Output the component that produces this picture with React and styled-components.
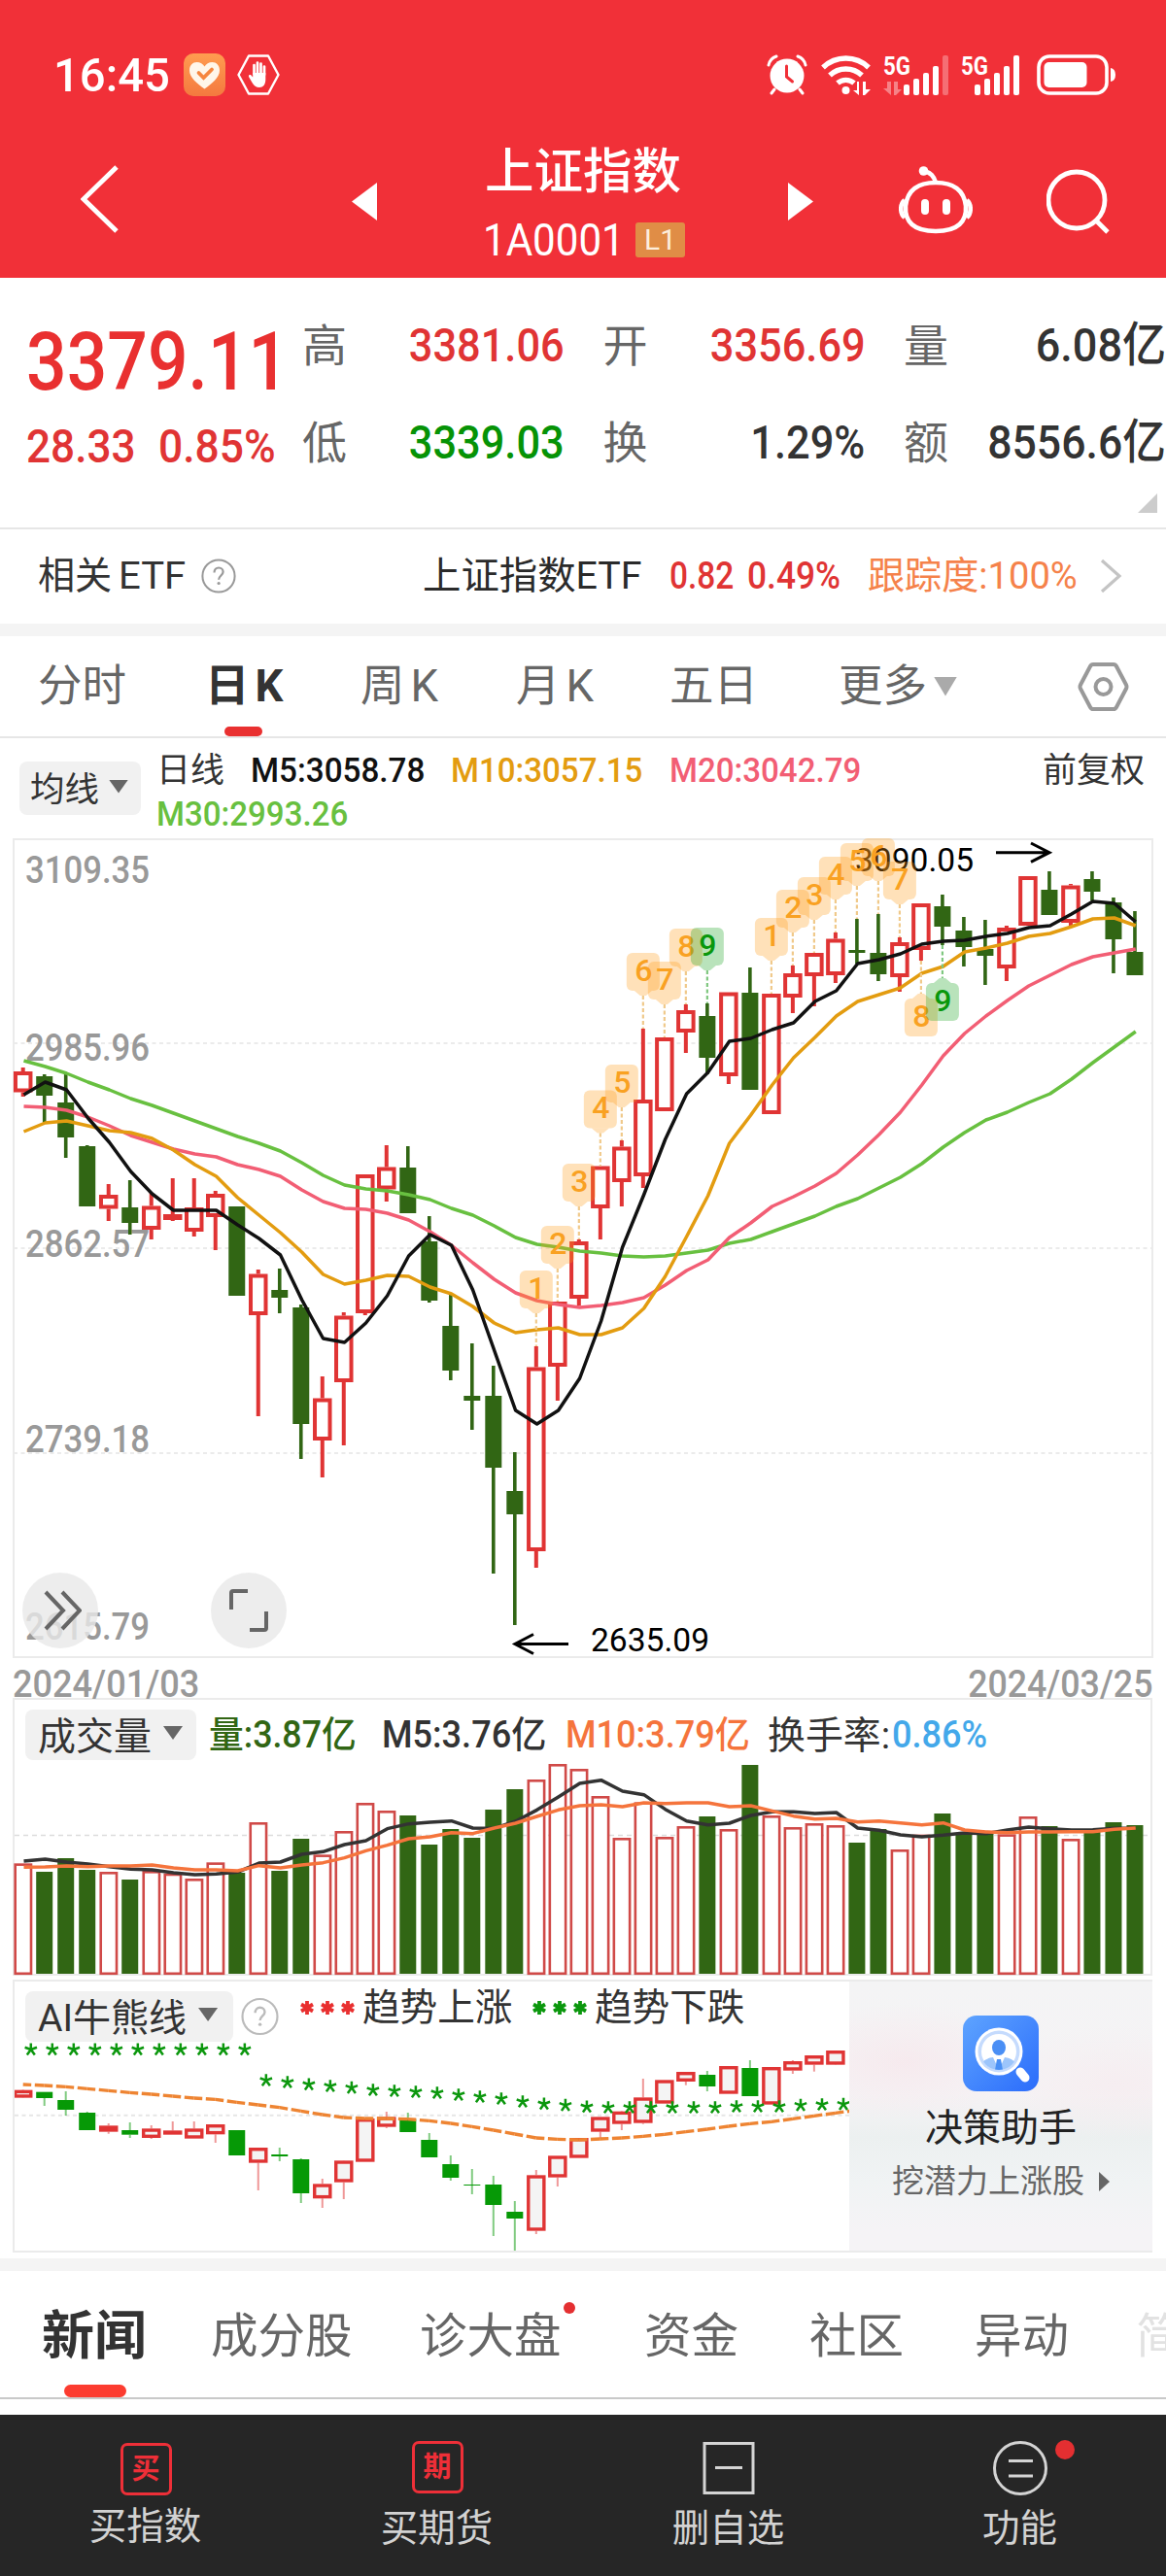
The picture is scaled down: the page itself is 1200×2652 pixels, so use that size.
import React from "react";
import styled, { createGlobalStyle } from "styled-components";

const GlobalStyle = createGlobalStyle`
  * { box-sizing: border-box; }
  body {
    margin: 0;
    background: #fff;
    font-family: Roboto, "Noto Sans CJK SC", sans-serif;
    color: #333;
  }
`;

const RED = "#e03434";
const GREEN = "#316614";
const FONT = 'Roboto, "Noto Sans CJK SC", sans-serif';

/* ---------- data ---------- */
const STEP = 22.005;
const cx = (i) => 23.7 + i * STEP;

// direction, high, body top, body bottom, low
const candles = [
  ["r", 1099, 1103, 1124.5, 1129], ["g", 1106, 1108, 1128, 1157], ["g", 1106, 1135, 1171, 1192],
  ["g", 1179, 1180, 1242, 1242], ["r", 1219, 1230, 1244.5, 1257], ["g", 1215, 1243, 1259, 1271],
  ["r", 1228, 1241.5, 1266, 1276], ["r", 1213, 1250, 1256, 1257], ["r", 1213, 1243, 1268, 1273],
  ["r", 1226, 1229, 1253, 1287], ["g", 1242, 1242, 1334, 1334], ["r", 1307, 1311.5, 1354, 1458],
  ["g", 1306, 1328, 1336, 1352], ["g", 1343, 1346, 1466, 1502], ["r", 1417, 1439.5, 1483, 1521],
  ["r", 1351, 1354.5, 1423, 1488], ["r", 1209, 1209, 1352, 1354], ["r", 1179, 1201.5, 1224.5, 1237],
  ["g", 1180, 1202, 1249, 1249], ["g", 1252, 1278, 1339, 1341], ["g", 1333, 1365, 1411, 1421],
  ["g", 1383, 1437, 1442, 1472], ["g", 1406, 1437, 1511, 1620], ["g", 1495, 1535, 1559, 1673],
  ["r", 1386, 1407.5, 1597, 1614], ["r", 1340, 1340, 1407, 1442], ["r", 1276, 1278, 1337, 1344],
  ["r", 1200.5, 1200.5, 1244, 1276], ["r", 1174, 1180.5, 1217, 1242], ["r", 1059, 1132, 1211, 1223],
  ["r", 1068, 1068, 1144, 1144], ["r", 1034, 1040, 1063, 1084], ["g", 1033, 1046, 1089, 1106],
  ["r", 1021.5, 1021.5, 1108, 1116], ["g", 996, 1022, 1122, 1122], ["r", 1023, 1023, 1147, 1147],
  ["r", 994, 1002, 1027, 1043], ["r", 981, 981, 1005, 1036], ["r", 960, 966.5, 1004, 1012],
  ["g", 946, 978, 981, 992], ["g", 941, 981, 1003, 1010], ["r", 965, 970, 1006, 1021],
  ["r", 930, 930, 978, 989], ["g", 921, 933, 954, 973], ["g", 944, 958, 975, 995],
  ["g", 947, 977, 984, 1014], ["r", 953, 955, 997, 1010], ["r", 902, 902, 953, 953],
  ["g", 897, 916, 942, 942], ["r", 910, 911.5, 950, 953], ["g", 897, 905, 918, 927],
  ["g", 924, 929, 967, 1002], ["g", 938, 980, 1004, 1004],
];

const ma5 = [1127, 1114, 1122, 1151, 1176, 1206, 1229, 1246, 1246, 1246, 1261, 1275, 1292, 1338, 1378, 1382, 1362, 1334, 1293, 1271, 1282, 1328, 1390, 1452, 1466, 1452, 1419, 1360, 1284, 1230, 1173, 1126, 1104, 1072, 1069, 1060, 1053, 1031, 1020, 992, 988, 982, 972, 969, 968, 964, 961, 955, 953, 941, 928, 930, 949];
const ma10 = [1165, 1156, 1154, 1159, 1164, 1166, 1172, 1184, 1199, 1211, 1233, 1251, 1269, 1289, 1312, 1322, 1318, 1313, 1314, 1325, 1332, 1345, 1362, 1372, 1369, 1367, 1374, 1374, 1367, 1347, 1314, 1273, 1231, 1177, 1148, 1117, 1089, 1068, 1046, 1031, 1024, 1017, 1002, 995, 980, 976, 971, 964, 961, 954, 946, 945, 953];
const ma20 = [1139, 1140, 1143, 1150, 1159, 1169, 1176, 1183, 1188, 1191, 1199, 1204, 1211, 1225, 1237, 1244, 1245, 1249, 1256, 1268, 1282, 1300, 1317, 1331, 1339, 1343, 1346, 1344, 1341, 1336, 1323, 1308, 1297, 1274, 1259, 1242, 1232, 1221, 1208, 1189, 1168, 1145, 1117, 1087, 1064, 1046, 1030, 1015, 1004, 993, 985, 981, 977];
const ma30 = [1092, 1098, 1105, 1114, 1122, 1131, 1138, 1146, 1154, 1162, 1170, 1177, 1185, 1197, 1210, 1220, 1224, 1226, 1230, 1235, 1244, 1251, 1262, 1274, 1281, 1284, 1288, 1290, 1293, 1294, 1293, 1290, 1287, 1280, 1276, 1268, 1260, 1252, 1242, 1234, 1223, 1212, 1198, 1181, 1166, 1153, 1145, 1135, 1126, 1111, 1094, 1078, 1062];

// candle index, count, drawn under the candle
const turns = [
  [24, 1], [25, 2], [26, 3], [27, 4], [28, 5], [29, 6], [30, 7], [31, 8], [32, 9],
  [35, 1], [36, 2], [37, 3], [38, 4], [39, 5], [40, 6], [41, 7], [42, 8, true], [43, 9, true],
];

const volumeTops = [535, 561, 519, 555, 561, 585, 558, 566, 582, 532, 564, 408, 558, 459, 508, 435, 348, 372, 387, 477, 429, 456, 369, 306, 276, 228, 243, 327, 456, 346, 453, 420, 390, 429, 231, 387, 423, 411, 417, 471, 429, 492, 446, 381, 444, 440, 445, 390, 420, 459, 435, 408, 417];
const vol5 = [528, 522, 531, 537, 545, 553, 555, 564, 570, 568, 562, 534, 531, 507, 499, 477, 465, 428, 413, 408, 404, 426, 427, 405, 370, 330, 288, 278, 312, 323, 368, 404, 416, 411, 387, 376, 376, 381, 378, 426, 433, 447, 453, 448, 441, 443, 432, 423, 428, 432, 431, 427, 427];
const vol10 = [547, 546, 543, 545, 543, 543, 540, 549, 555, 555, 558, 542, 549, 540, 533, 518, 496, 479, 459, 453, 440, 443, 426, 411, 390, 370, 357, 354, 360, 348, 350, 348, 348, 360, 357, 373, 389, 398, 396, 407, 404, 410, 416, 410, 432, 438, 440, 438, 438, 437, 437, 430, 426];

const trendCandles = [
  ["r", 364, 365, 389, 390], ["g", 371, 371, 390, 414], ["g", 369, 396, 426, 444], ["g", 432, 435, 489, 489],
  ["r", 468, 475, 494, 500], ["g", 465, 489, 503, 513], ["r", 474, 484, 513, 516], ["r", 462, 490, 503, 503],
  ["r", 462, 484, 515, 515], ["r", 471, 471, 502, 528], ["g", 489, 489, 567, 567], ["r", 543, 543, 590, 675],
  ["g", 543, 564, 570, 585], ["g", 576, 579, 684, 714], ["r", 639, 655, 700, 729], ["r", 582, 583, 650, 702],
  ["r", 453, 453, 587, 587], ["r", 432, 448, 479, 483], ["g", 435, 455, 495, 495], ["g", 498, 519, 573, 573],
  ["g", 567, 594, 636, 645], ["g", 609, 657, 660, 687], ["g", 630, 657, 720, 816], ["g", 708, 741, 762, 861],
  ["r", 612, 628, 800, 810], ["r", 568, 568, 635, 663], ["r", 513, 513, 575, 575], ["r", 448, 448, 494, 515],
  ["r", 430, 431, 470, 489], ["r", 330, 388, 467, 470], ["r", 334, 334, 407, 407], ["r", 309, 309, 339, 350],
  ["g", 306, 318, 354, 369], ["r", 291, 291, 377, 377], ["g", 273, 297, 384, 384], ["r", 294, 294, 410, 410],
  ["r", 273, 276, 305, 315], ["r", 258, 258, 287, 308], ["r", 243, 243, 287, 288],
];
const trendLine = [348, 351, 355, 361, 367, 373, 378, 384, 390, 394, 403, 411, 419, 430, 441, 450, 453, 453, 455, 460, 468, 478, 489, 501, 513, 517, 519, 516, 513, 508, 502, 494, 486, 477, 469, 463, 454, 445, 436, 427];
const stars = [240, 240, 240, 240, 240, 240, 240, 240, 240, 240, 240, 335, 341, 348, 353, 358, 365, 368, 371, 374, 380, 386, 392, 401, 408, 412, 417, 419, 419, 419, 419, 419, 419, 416, 416, 416, 412, 410, 409];

const volY = (v) => 1740 + v / 3;
const trendY = (v) => 2030 + v / 3;
const points = (list, fn = (v) => v) => list.map((v, i) => `${cx(i) + 0.8},${fn(v)}`).join(" ");

/* ---------- shared ---------- */
const Page = styled.main`
  width: 1200px;
  height: 2652px;
  overflow: hidden;
  background: #fff;
`;
const Figure = styled.span`
  display: flex;
  justify-content: ${(p) => (p.$end ? "flex-end" : "flex-start")};
  width: ${(p) => (p.$w ? `${p.$w}px` : "auto")};
  flex: none;
  white-space: nowrap;
  font-size: ${(p) => p.$size}px;
  font-weight: ${(p) => p.$weight || 500};
  color: ${(p) => p.$color || "inherit"};
  transform: scaleX(${(p) => p.$k || 0.88});
  transform-origin: ${(p) => (p.$end ? "right" : "left")} center;
`;
const Band = styled.div`
  height: 13px;
  background: #f4f4f4;
`;

/* ---------- header ---------- */
const Header = styled.header`
  height: 286px;
  background: #f13038;
  color: #fff;
`;
const StatusBar = styled.div`
  display: flex;
  align-items: center;
  height: 128px;
  padding: 26px 52px 0 55px;
`;
const StatusIcons = styled.div`
  display: flex;
  align-items: center;
  margin-left: auto;
`;
const NavBar = styled.nav`
  display: grid;
  grid-template-columns: 279px 137px 312px 115px 151px 1fr;
  align-items: center;
  height: 158px;
  padding-left: 83px;
`;
const TitleBlock = styled.div`
  align-self: start;
  padding-top: 19px;
`;
const Title = styled.h1`
  margin: 0;
  font-size: 50.5px;
  line-height: 60px;
  font-weight: 500;
`;
const CodeRow = styled.div`
  display: flex;
  align-items: center;
  height: 60px;
  margin: 10px 0 0 -2px;
`;
const LevelBadge = styled.span`
  width: 51px;
  height: 36px;
  border-radius: 3px;
  background: #e08d46;
  color: #fdeedd;
  font-size: 30px;
  line-height: 36px;
  text-align: center;
`;

const SignalIcon = ({ dim }) => (
  <svg width={dim ? 68 : 61} height="42" viewBox={dim ? "0 0 68 42" : "0 0 61 42"} fill="#fff" overflow="visible">
    <text x="0" y="20.500" fontSize="26" fontWeight="700" fontFamily={FONT} textLength="28" lengthAdjust="spacingAndGlyphs">5G</text>
    {dim && <path d="M0 35h4v-7h4v14zM11 28h4v8h4l-6 6h-2z" opacity=".4" />}
    {[11, 17, 23, 30, 41].map((h, i) => (
      <rect key={i} x={(dim ? 21 : 14) + i * 10} y={42 - h} width="6" height={h} rx="2" opacity={dim && i === 4 ? 0.3 : 1} />
    ))}
  </svg>
);

const StatusSection = () => (
  <StatusBar>
    <Figure $size={49} $k={0.965} $w={134}>16:45</Figure>
    <svg width="43" height="44" viewBox="0 0 43 44">
      <defs>
        <linearGradient id="heart" x1="0" y1="0" x2="0" y2="1">
          <stop offset="0" stopColor="#ff9c50" />
          <stop offset="1" stopColor="#f4793f" />
        </linearGradient>
      </defs>
      <rect width="43" height="44" rx="10" fill="url(#heart)" />
      <path d="M21.5 36.500C14 31 6 25 6 17.500C6 12 9.500 9 13.500 9C17 9 20 11 21.500 13.500C23 11 26 9 29.500 9C33.500 9 37 12 37 17.500C37 25 29 31 21.500 36.500z" fill="#fff6ea" />
      <path d="M15.500 20l5 5 8.500-8.500" fill="none" stroke="#f6863f" strokeWidth="3.800" strokeLinecap="round" />
    </svg>
    <svg width="44" height="42" viewBox="0 0 44 42" style={{ marginLeft: 12 }} fill="none" stroke="#fff">
      <path d="M12 1.500h20L42.500 21 32 40.500H12L1.500 21z" strokeWidth="2.400" strokeLinejoin="round" />
      <path d="M17.500 20v-9M21 20V8.500M24.500 20V9.500M28 21v-8.500" strokeWidth="2.700" strokeLinecap="round" />
      <path d="M16.200 19h13.100v7c0 5-2.500 8-6.300 8-3.500 0-5.500-1.500-7.500-5l-3.500-6c-.5-2 1.500-2.500 2.500-1.500l1.700 2z" fill="#fff" stroke="none" />
    </svg>
    <StatusIcons>
      <svg width="42" height="42" viewBox="0 0 42 42">
        <circle cx="21" cy="22" r="17.500" fill="#fff" />
        <path d="M2 11a12 12 0 0 1 8-9M40 11a12 12 0 0 0-8-9M8 36l-3 4M34 36l3 4" fill="none" stroke="#fff" strokeWidth="3" strokeLinecap="round" />
        <path d="M20.500 12v11l6 5" fill="none" stroke="#f13038" strokeWidth="3" strokeLinecap="round" />
      </svg>
      <svg width="52" height="42" viewBox="0 0 52 42" style={{ marginLeft: 14 }} fill="none" stroke="#fff" strokeWidth="5.400">
        <path d="M2 13.500a34 34 0 0 1 47 0" />
        <path d="M9 21.500a24 24 0 0 1 33 0" />
        <path d="M17 29.500a13 13 0 0 1 17 0" />
        <circle cx="25.500" cy="37" r="4" fill="#fff" stroke="none" />
        <path d="M33 37h4v-9h2v14zM43 28h3v8h5l-6 6h-2z" fill="#fff" stroke="none" />
      </svg>
      <svg width="12" height="1" />
      <SignalIcon dim />
      <svg width="12" height="1" />
      <SignalIcon />
      <svg width="81" height="42" viewBox="0 0 81 42" style={{ marginLeft: 17 }}>
        <rect x="2" y="2" width="70" height="38" rx="11" fill="none" stroke="#fff" strokeWidth="3.600" />
        <rect x="7.500" y="8" width="44" height="26" rx="5" fill="#fff" />
        <path d="M76 14q5 1 5 7t-5 7z" fill="#fff" />
      </svg>
    </StatusIcons>
  </StatusBar>
);

const HeaderSection = () => (
  <Header>
    <StatusSection />
    <NavBar>
      <svg width="40" height="70" viewBox="0 0 40 70" fill="none" style={{ marginTop: -4 }}>
        <path d="M37 2L3 35l34 33" stroke="#fff" strokeWidth="5" />
      </svg>
      <svg width="26" height="39" viewBox="0 0 26 39"><path d="M26 0v39L0 19.500z" fill="#fff" /></svg>
      <TitleBlock>
        <Title>上证指数</Title>
        <CodeRow>
          <Figure $size={46} $k={0.915} $w={157} $weight={400}>1A0001</Figure>
          <LevelBadge>L1</LevelBadge>
        </CodeRow>
      </TitleBlock>
      <svg width="26" height="39" viewBox="0 0 26 39"><path d="M0 0v39l26-19.500z" fill="#fff" /></svg>
      <svg width="76" height="70" viewBox="0 0 76 70" fill="none" stroke="#fff" strokeWidth="4.600" style={{ marginTop: -3, marginLeft: -1 }}>
        <path d="M38 17C36 10 33 7 26 5" />
        <circle cx="25.500" cy="5" r="4.800" fill="#fff" stroke="none" />
        <path d="M38 17c18 0 29 7 31 24 1 16-8 26-31 26S6 57 7 41C9 24 20 17 38 17z" />
        <path d="M6 35c-5 4-5 14 0 18M70 35c5 4 5 14 0 18" />
        <path d="M27 38v8M49 38v8" strokeWidth="8" strokeLinecap="round" />
      </svg>
      <svg width="66" height="68" viewBox="0 0 66 68" fill="none" stroke="#fff" strokeWidth="4.800">
        <circle cx="31" cy="33" r="29" />
        <path d="M51 54l12 12" />
      </svg>
    </NavBar>
  </Header>
);

/* ---------- quote ---------- */
const Quote = styled.section`
  position: relative;
  display: flex;
  height: 259px;
  padding-left: 27px;
  border-bottom: 2px solid #e6e6e6;
`;
const PriceBlock = styled.div`
  width: 284px;
  padding-top: 43px;
  line-height: 87px;
`;
const ChangeRow = styled.div`
  display: flex;
`;
const StatGrid = styled.div`
  display: grid;
  grid-template-columns: repeat(3, 309.5px);
  grid-auto-rows: 100px;
  padding-top: 20px;
`;
const Stat = styled.div`
  display: flex;
  justify-content: space-between;
  width: 270px;
  line-height: 100px;
`;
const StatLabel = styled.span`
  font-size: 46px;
  line-height: 100px;
  color: #666;
`;
const Corner = styled.i`
  position: absolute;
  right: 9px;
  bottom: 15px;
  width: 20px;
  height: 20px;
  background: #ccc;
  clip-path: polygon(100% 0, 100% 100%, 0 100%);
`;

const stats = [
  ["高", "3381.06", RED], ["开", "3356.69", RED], ["量", "6.08亿", "#333", 0.92],
  ["低", "3339.03", "#069306"], ["换", "1.29%", "#333"], ["额", "8556.6亿", "#333", 0.91],
];

const QuoteSection = () => (
  <Quote>
    <PriceBlock>
      <Figure $size={84} $k={0.872} $color="#e93030">3379.11</Figure>
      <ChangeRow>
        <Figure $size={49} $k={0.9} $w={136} $color={RED}>28.33</Figure>
        <Figure $size={49} $k={0.905} $color={RED}>0.85%</Figure>
      </ChangeRow>
    </PriceBlock>
    <StatGrid>
      {stats.map(([label, value, color, k]) => (
        <Stat key={label}>
          <StatLabel>{label}</StatLabel>
          <Figure $size={49} $k={k || 0.885} $color={color} $end>{value}</Figure>
        </Stat>
      ))}
    </StatGrid>
    <Corner />
  </Quote>
);

/* ---------- related etf ---------- */
const EtfRow = styled.section`
  display: flex;
  align-items: center;
  height: 97px;
  padding: 0 0 2px 39px;
  line-height: 60px;
`;
const EtfName = styled.span`
  width: 396px;
  display: flex;
  align-items: center;
`;

const HelpIcon = ({ size, color }) => (
  <svg width={size} height={size} viewBox="0 0 36 36" fill="none" stroke={color}>
    <circle cx="18" cy="18" r="16.600" strokeWidth="2" />
    <path d="M13.500 14.500c0-3 2-5 4.600-5s4.500 1.800 4.500 4.300c0 3.500-4.500 4-4.500 8" strokeWidth="2.200" />
    <circle cx="18.100" cy="25.500" r="1.600" fill={color} stroke="none" />
  </svg>
);

const EtfSection = () => (
  <EtfRow>
    <EtfName>
      <Figure $size={38.5} $k={0.99} $w={83} $weight={400}>相关</Figure>
      <Figure $size={38.5} $k={1.04} $w={85} $weight={400}>ETF</Figure>
      <HelpIcon size={36} color="#999" />
    </EtfName>
    <Figure $size={39} $k={1.01} $w={254} $color="#2a2a2a" $weight={400}>上证指数ETF</Figure>
    <Figure $size={38} $k={0.88} $w={80} $color={RED}>0.82</Figure>
    <Figure $size={38} $k={0.93} $w={124} $color={RED}>0.49%</Figure>
    <Figure $size={38.5} $k={0.99} $w={239} $color="#f5824a" $weight={400}>跟踪度:100%</Figure>
    <svg width="23" height="36" viewBox="0 0 23 36"><path d="M2 2l18 16L2 34" fill="none" stroke="#c4c4c4" strokeWidth="3.200" /></svg>
  </EtfRow>
);

/* ---------- period tabs ---------- */
const PeriodTabs = styled.nav`
  display: grid;
  grid-template-columns: 175px 157px 160px 158px 174px 246px 1fr;
  align-items: center;
  height: 105px;
  padding-left: 39px;
  border-bottom: 2px solid #e6e6e6;
`;
const PeriodTab = styled.span`
  position: relative;
  display: flex;
  align-items: center;
  height: 103px;
  line-height: 60px;
  font-size: 45.5px;
  white-space: nowrap;
  color: ${(p) => (p.$active ? "#333" : "#666")};
  font-weight: ${(p) => (p.$active ? 700 : 400)};
  text-indent: ${(p) => (p.$active ? "-3px" : "0")};
  &::after {
    content: "";
    display: ${(p) => (p.$active ? "block" : "none")};
    position: absolute;
    left: 17px;
    bottom: 0;
    width: 39px;
    height: 10px;
    border-radius: 5px;
    background: #e93030;
  }
`;
const PeriodUnit = styled.span`
  margin-left: 6px;
  text-indent: 0;
`;
const Caret = styled.i`
  width: ${(p) => p.$w || 20}px;
  height: ${(p) => p.$h || 14}px;
  margin-left: 12px;
  background: ${(p) => p.$color || "#666"};
  clip-path: polygon(0 0, 100% 0, 50% 100%);
`;

const periods = [["分时"], ["日", "K"], ["周", "K"], ["月", "K"], ["五日"]];

const PeriodSection = () => (
  <PeriodTabs>
    {periods.map(([name, unit]) => (
      <PeriodTab key={name} $active={name === "日"}>
        {name}{unit && <PeriodUnit>{unit}</PeriodUnit>}
      </PeriodTab>
    ))}
    <PeriodTab>更多<Caret $w={24} $h={20} $color="#aaa" style={{ marginLeft: 7 }} /></PeriodTab>
    <svg width="53" height="50" viewBox="0 0 53 50" fill="none" stroke="#999" strokeWidth="4">
      <path d="M16 2h21q2 0 3 2l10 19q1 2 0 4L40 46q-1 2-3 2H16q-2 0-3-2L3 27q-1-2 0-4L13 4q1-2 3-2z" />
      <circle cx="26.500" cy="25" r="8" />
    </svg>
  </PeriodTabs>
);

/* ---------- ma legend ---------- */
const MaBar = styled.section`
  display: flex;
  height: 103px;
  padding-left: 20px;
`;
const PickButton = styled.span`
  display: flex;
  align-items: center;
  flex: none;
  width: ${(p) => p.$w}px;
  height: ${(p) => p.$h || 52}px;
  padding-left: ${(p) => p.$pad || 13}px;
  padding-bottom: 4px;
  border-radius: 8px;
  background: #f1f1f1;
  font-size: ${(p) => p.$size || 39}px;
  white-space: nowrap;
`;
const MaLegend = styled.div`
  flex: 1;
  padding: 11px 0 0 16px;
`;
const LegendRow = styled.div`
  display: flex;
  height: 45px;
  line-height: 45px;
`;
const Adjust = styled.span`
  padding: 11px 22px 0 0;
  font-size: 35px;
  line-height: 45px;
`;

const MaSection = () => (
  <MaBar>
    <PickButton $w={125} $h={55} $pad={11} $size={35.5} style={{ marginTop: 24 }}>均线<Caret style={{ marginLeft: 10 }} /></PickButton>
    <MaLegend>
      <LegendRow>
        <Figure $size={35} $k={1} $w={97} $weight={400}>日线</Figure>
        <Figure $size={35} $k={0.95} $w={206} $color="#111">M5:3058.78</Figure>
        <Figure $size={35} $k={0.945} $w={225} $color="#e39c10">M10:3057.15</Figure>
        <Figure $size={35} $k={0.945} $w={220} $color="#f25e74">M20:3042.79</Figure>
      </LegendRow>
      <LegendRow>
        <Figure $size={35} $k={0.945} $color="#68c040">M30:2993.26</Figure>
      </LegendRow>
    </MaLegend>
    <Adjust>前复权</Adjust>
  </MaBar>
);

/* ---------- charts ---------- */
const ChartPane = styled.section`
  position: relative;
  height: ${(p) => p.$h}px;
`;
const Canvas = styled.svg`
  display: block;
`;
const RoundButton = styled.button`
  position: absolute;
  left: ${(p) => p.$left}px;
  bottom: 10px;
  width: 78px;
  height: 78px;
  padding: 0;
  border: 0;
  border-radius: 50%;
  background: rgba(232, 232, 232, 0.8);
  display: flex;
  align-items: center;
  justify-content: center;
`;
const DateRow = styled.div`
  display: flex;
  justify-content: space-between;
  height: 41px;
  padding: 5px 14px 0 13px;
  line-height: 44px;
  color: #999;
`;
const PaneHead = styled.div`
  display: flex;
  height: ${(p) => p.$h}px;
  padding: 10px 0 0 11px;
`;
const FramedPane = styled.section`
  display: flex;
  width: 1173px;
  margin-left: 13px;
  border: 2px solid #ebebeb;
`;
const PaneBody = styled.div`
  width: ${(p) => p.$w}px;
  flex: none;
`;
const Readout = styled.div`
  display: flex;
  height: 52px;
  line-height: 53px;
  margin-left: ${(p) => p.$ml || 0}px;
`;

const Candle = ({ i, data: [dir, high, top, bottom, low], wick, down, fill, opacity = 1, stroke = 4 }) => {
  const x = cx(i);
  const color = dir === "r" ? RED : down;
  return (
    <g>
      <path d={`M${x} ${high}V${top}M${x} ${bottom}V${low}`} stroke={color} strokeWidth={wick} opacity={opacity} />
      {dir === "r" ? (
        <rect x={x - 9.75 + stroke / 2} y={top + stroke / 2} width={19.5 - stroke} height={Math.max(bottom - top - stroke, 0.5)} fill={fill} stroke={color} strokeWidth={stroke} />
      ) : (
        <rect x={x - 8.5} y={top} width="17" height={Math.max(bottom - top, 1)} fill={color} />
      )}
    </g>
  );
};

const TurnTag = ({ i, n, below }) => {
  const x = cx(i);
  const edge = below ? candles[i][4] : candles[i][1];
  const top = below ? edge + 39 : edge - 78;
  const nine = n === 9;
  const tip = below
    ? `M${x - 9} ${top}L${x - 3} ${top - 5}H${x + 3}L${x + 9} ${top}z`
    : `M${x - 9} ${top + 39}L${x - 3} ${top + 44}H${x + 3}L${x + 9} ${top + 39}z`;
  return (
    <g>
      <path d={below ? `M${x} ${edge}V${top - 5}` : `M${x} ${top + 44}V${edge}`} stroke={nine ? "#7fc77f" : "#f0c98a"} strokeWidth="2.200" strokeDasharray="4 2.500" />
      <g fill={nine ? "#17a31f" : "#ff9b17"}>
        <path d={tip} opacity=".3" />
        <rect x={x - 17} y={top} width="34" height="39" rx="6" opacity=".3" />
        <text x={x + 0.5} y={top + 28.5} fontSize="32" fontWeight="500" textAnchor="middle" fontFamily={FONT} fill={nine ? "#0a970c" : "#f9a122"}>{n}</text>
      </g>
    </g>
  );
};

const axis = [["3109.35", 909], ["2985.96", 1091.5], ["2862.57", 1294], ["2739.18", 1495], ["2615.79", 1688]];

const KLineChart = () => (
  <ChartPane $h={844}>
    <Canvas width="1200" height="844" viewBox="0 863 1200 844">
      <rect x="14" y="864" width="1172" height="842" fill="none" stroke="#ebebeb" strokeWidth="2" />
      {[1074, 1285, 1496].map((y) => (
        <path key={y} d={`M14 ${y}H1186`} stroke="#ebebeb" strokeWidth="2" strokeDasharray="4 3.500" />
      ))}
      <g fill="#999" fontSize="38" fontWeight="500" fontFamily={FONT}>
        {axis.map(([label, y]) => (
          <text key={label} x="26" y={y} textLength="128" lengthAdjust="spacingAndGlyphs">{label}</text>
        ))}
      </g>
      {candles.map((c, i) => (
        <Candle key={i} i={i} data={c} wick={c[0] === "r" ? 4 : 3.6} down={GREEN} fill="#fff" />
      ))}
      <g fontFamily={FONT} fontSize="34" fill="#000">
        <text x="880" y="897" textLength="122" lengthAdjust="spacingAndGlyphs">3090.05</text>
        <text x="608" y="1700" textLength="122" lengthAdjust="spacingAndGlyphs">2635.09</text>
      </g>
      <g fill="none" stroke="#000" strokeWidth="3">
        <path d="M1025 877.700H1079M1061 868l19 9.700-19 9.700" />
        <path d="M585 1692.500H531M549 1682.500l-19 10 19 10" />
      </g>
      <g fill="none" strokeWidth="3.500" strokeLinejoin="round">
        <polyline points={points(ma30)} stroke="#68c040" />
        <polyline points={points(ma20)} stroke="#f25e74" />
        <polyline points={points(ma10)} stroke="#e39c10" />
        <polyline points={points(ma5)} stroke="#111" />
      </g>
      {turns.map(([i, n, below]) => (
        <TurnTag key={i} i={i} n={n} below={below} />
      ))}
    </Canvas>
    <RoundButton $left={23}>
      <svg width="40" height="44" viewBox="0 0 40 44" fill="none" stroke="#666" strokeWidth="4" style={{ marginLeft: 3 }}>
        <path d="M3 3l18 19L3 41M20 3l18 19-18 19" />
      </svg>
    </RoundButton>
    <RoundButton $left={217}>
      <svg width="42" height="46" viewBox="0 0 42 46" fill="none" stroke="#666" strokeWidth="4">
        <path d="M20 3H5Q3 3 3 5v17M22 43h15q2 0 2-2V24" />
      </svg>
    </RoundButton>
  </ChartPane>
);

const VolumeSection = () => (
  <FramedPane>
    <PaneBody $w={1169}>
      <PaneHead $h={62}>
        <PickButton $w={176}>成交量<Caret /></PickButton>
        <Readout $ml={13}>
          <Figure $size={38} $k={0.94} $w={178} $color={GREEN}>量:3.87亿</Figure>
          <Figure $size={38} $k={0.95} $w={189}>M5:3.76亿</Figure>
          <Figure $size={38} $k={0.95} $w={208} $color="#f5743c">M10:3.79亿</Figure>
          <Figure $size={38.5} $k={1.01} $w={128} $weight={400}>换手率:</Figure>
          <Figure $size={38} $k={0.95} $color="#43a8ea">0.86%</Figure>
        </Readout>
      </PaneHead>
      <Canvas width="1169" height="220" viewBox="15 1812 1169 220" style={{ overflow: "visible" }}>
        <path d="M15 1889.500H1184" stroke="#dcdcdc" strokeWidth="1.500" strokeDasharray="5 4" />
        {volumeTops.map((v, i) => {
          const y = volY(v);
          return candles[i][0] === "r" ? (
            <rect key={i} x={cx(i) - 8} y={y + 1.3} width="16.300" height={2030.5 - y} fill="#fff" stroke="#d04a48" strokeWidth="2.600" />
          ) : (
            <rect key={i} x={cx(i) - 8.5} y={y} width="17" height={2032 - y} fill={GREEN} />
          );
        })}
        <g fill="none" strokeWidth="3.500" strokeLinejoin="round">
          <polyline points={points(vol5, volY)} stroke="#333" />
          <polyline points={points(vol10, volY)} stroke="#f5743c" />
        </g>
      </Canvas>
    </PaneBody>
  </FramedPane>
);

const Assistant = styled.aside`
  display: flex;
  flex-direction: column;
  align-items: center;
  flex: none;
  width: 312px;
  padding-top: 35px;
  background:
    radial-gradient(ellipse 130px 60px at 18% 30%, rgba(247, 230, 235, 0.7), transparent),
    radial-gradient(ellipse 130px 60px at 88% 38%, rgba(247, 232, 236, 0.5), transparent),
    linear-gradient(#f4f4f5 0%, #f5f3f5 42%, #ecf0f0 58%, #f0f3f4 74%, #f5f3f6 92%);
`;
const AssistantName = styled.strong`
  margin-top: 13px;
  font-size: 39px;
  line-height: 50px;
  font-weight: 400;
  color: #222;
`;
const AssistantHint = styled.span`
  display: flex;
  align-items: center;
  gap: 15px;
  margin-top: 5px;
  font-size: 33px;
  line-height: 50px;
  color: #666;
  &::after {
    content: "";
    width: 11px;
    height: 20px;
    background: #666;
    clip-path: polygon(0 0, 100% 50%, 0 100%);
  }
`;

// three bold asterisks in front of a legend entry
const StarKey = ({ color }) => (
  <svg width="66" height="52" viewBox="0 0 66 52" stroke={color} strokeWidth="3.800">
    {[9, 30, 51].map((x) => (
      <path key={x} d={`M${x} 19v14M${x - 6} 22.500l12 7M${x + 6} 22.500l-12 7`} />
    ))}
  </svg>
);

const Star = ({ x, y }) => (
  <path d={`M${x} ${y}v-6.500M${x} ${y}l6.200-2.200M${x} ${y}l-6.200-2.200M${x} ${y}l4 5.600M${x} ${y}l-4 5.600`} stroke="#0b970d" strokeWidth="2.500" />
);

const TrendSection = () => (
  <FramedPane style={{ marginTop: 4 }}>
    <PaneBody $w={859}>
      <PaneHead $h={62}>
        <PickButton $w={214}>AI牛熊线<Caret /></PickButton>
        <Readout $ml={8}>
          <svg width="39" height="52" viewBox="0 0 39 52"><g transform="translate(0 6.500)"><HelpIcon size={39} color="#bbb" /></g></svg>
        </Readout>
        <Readout $ml={20} style={{ marginTop: -9, alignItems: "center" }}>
          <StarKey color="#e93030" />
          <Figure $size={39} $k={0.99} $w={173} $weight={400}>趋势上涨</Figure>
          <StarKey color="#0b970d" />
          <Figure $size={39} $k={0.99} $weight={400}>趋势下跌</Figure>
        </Readout>
      </PaneHead>
      <Canvas width="859" height="215" viewBox="15 2102 859 215">
        <path d="M15 2177.700H874" stroke="#e6e6e6" strokeWidth="2" strokeDasharray="4 3.500" />
        {trendCandles.map(([dir, ...v], i) => (
          <Candle key={i} i={i} data={[dir, ...v.map(trendY)]} wick={2} opacity={0.5} down="#069906" fill="#f4f4f4" stroke={3.4} />
        ))}
        {trendLine.slice(1).map((v, i) => (
          <path key={i} d={`M${cx(i)} ${trendY(trendLine[i])}L${cx(i + 1)} ${trendY(v)}`} stroke="#ee8432" strokeWidth="3.400" strokeDasharray="8.500 3.600 10.500" />
        ))}
        {stars.map((v, i) => (
          <Star key={i} x={31.8 + i * STEP} y={trendY(v)} />
        ))}
      </Canvas>
    </PaneBody>
    <Assistant>
      <svg width="78" height="78" viewBox="0 0 78 78">
        <defs>
          <linearGradient id="badge" x1="0" y1="0" x2="1" y2="1">
            <stop offset="0" stopColor="#5ea4ff" />
            <stop offset="1" stopColor="#2b6cfb" />
          </linearGradient>
          <clipPath id="lens"><circle cx="37" cy="37" r="19" /></clipPath>
        </defs>
        <rect width="78" height="78" rx="14" fill="url(#badge)" />
        <circle cx="37" cy="37" r="24.500" fill="#fff" />
        <circle cx="37" cy="37" r="21.500" fill="#c5dbfd" />
        <circle cx="37" cy="37" r="18" fill="#fff" />
        <g clipPath="url(#lens)">
          <path d="M20 60V49q3-5 11-6l6 13 6-13q8 1 11 6v11z" fill="#9cc5fb" />
          <path d="M35 45h4l2 11h-8z" fill="#4a90f5" />
        </g>
        <ellipse cx="37" cy="33" rx="7" ry="8" fill="#4a8ff5" />
        <path d="M59 58l5 6" stroke="#fff" strokeWidth="9" strokeLinecap="round" />
      </svg>
      <AssistantName>决策助手</AssistantName>
      <AssistantHint>挖潜力上涨股</AssistantHint>
    </Assistant>
  </FramedPane>
);

/* ---------- news tabs ---------- */
const NewsTabs = styled.nav`
  display: grid;
  grid-template-columns: 174px 215px 231px 170px 170px 166px 1fr;
  height: 132px;
  padding-left: 43px;
  border-bottom: 2px solid #c9c9c9;
`;
const NewsTab = styled.span`
  position: relative;
  height: 130px;
  font-size: ${(p) => (p.$active ? 54 : 48.5)}px;
  font-weight: ${(p) => (p.$active ? 700 : 400)};
  line-height: 135px;
  white-space: nowrap;
  color: ${(p) => (p.$active ? "#333" : p.$faded ? "#e2e2e2" : "#666")};
`;
const ActiveMark = styled.i`
  position: absolute;
  left: 23px;
  bottom: 0;
  width: 64px;
  height: 13px;
  border-radius: 7px;
  background: #fc3c30;
`;
const Dot = styled.i`
  position: absolute;
  top: ${(p) => p.$top}px;
  left: ${(p) => p.$left}px;
  width: ${(p) => p.$size}px;
  height: ${(p) => p.$size}px;
  border-radius: 50%;
  background: #e42f31;
`;

const NewsSection = () => (
  <NewsTabs>
    <NewsTab $active>新闻<ActiveMark /></NewsTab>
    <NewsTab>成分股</NewsTab>
    <NewsTab>诊大盘<Dot $top={32} $left={148} $size={12} /></NewsTab>
    <NewsTab>资金</NewsTab>
    <NewsTab>社区</NewsTab>
    <NewsTab>异动</NewsTab>
    <NewsTab $faded>简</NewsTab>
  </NewsTabs>
);

/* ---------- bottom bar ---------- */
const BottomBar = styled.footer`
  display: grid;
  grid-template-columns: repeat(4, 1fr);
  height: 166px;
  margin-top: 16px;
  background: #262626;
`;
const Action = styled.div`
  position: relative;
  display: flex;
  flex-direction: column;
  align-items: center;
  padding-top: 27px;
`;
const ActionLabel = styled.span`
  margin: 6px 1px 0 0;
  font-size: 38.5px;
  line-height: 56px;
  color: #d2d2d2;
`;
const CharBox = styled.span`
  width: 53px;
  height: 54px;
  margin: ${(p) => (p.$low ? "2px 0 0" : "0 0 2px")};
  border: 3px solid #ee2f38;
  border-radius: 7px;
  color: #ee2f38;
  font-size: 29px;
  font-weight: 700;
  line-height: 49px;
  text-align: center;
`;

const BottomSection = () => (
  <BottomBar>
    <Action>
      <CharBox $low>买</CharBox>
      <ActionLabel style={{ marginTop: 4 }}>买指数</ActionLabel>
    </Action>
    <Action>
      <CharBox>期</CharBox>
      <ActionLabel>买期货</ActionLabel>
    </Action>
    <Action>
      <svg width="56" height="56" viewBox="0 0 56 56" fill="none" stroke="#d4d4d4" strokeWidth="3">
        <path d="M3 2.500h50v51H3zM14 27.500h28" />
      </svg>
      <ActionLabel>删自选</ActionLabel>
    </Action>
    <Action>
      <svg width="58" height="56" viewBox="0 0 58 56" fill="none" stroke="#d4d4d4" strokeWidth="3">
        <circle cx="29" cy="28" r="26.500" />
        <path d="M17 20.500h25M17 36h25" />
      </svg>
      <ActionLabel>功能</ActionLabel>
      <Dot $top={26} $left={186} $size={20} />
    </Action>
  </BottomBar>
);

const App = () => (
  <Page>
    <GlobalStyle />
    <HeaderSection />
    <QuoteSection />
    <EtfSection />
    <Band />
    <PeriodSection />
    <MaSection />
    <KLineChart />
    <DateRow>
      <Figure $size={38} $k={0.95} $weight={500}>2024/01/03</Figure>
      <Figure $size={38} $k={0.94} $weight={500} $end>2024/03/25</Figure>
    </DateRow>
    <VolumeSection />
    <TrendSection />
    <Band style={{ marginTop: 6 }} />
    <NewsSection />
    <BottomSection />
  </Page>
);

export default App;
